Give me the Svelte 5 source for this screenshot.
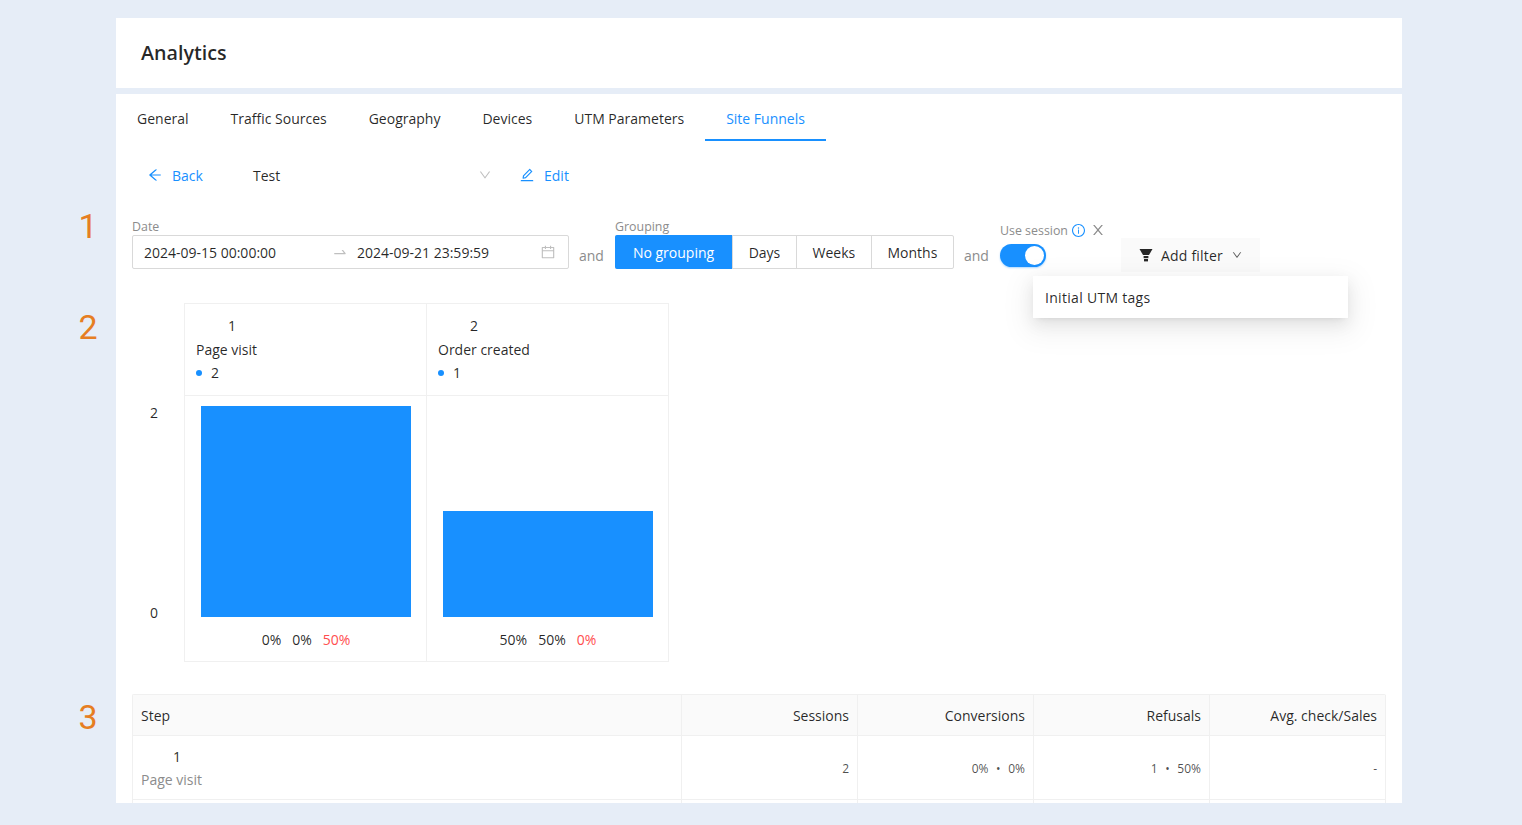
<script>
  // Site funnels report page
  const tabs = ['General', 'Traffic Sources', 'Geography', 'Devices', 'UTM Parameters', 'Site Funnels'];
  const groupings = ['No grouping', 'Days', 'Weeks', 'Months'];

  const steps = [
    { n: 1, name: 'Page visit', count: 2, height: 211, conv: '0%', conv2: '0%', refuse: '50%' },
    { n: 2, name: 'Order created', count: 1, height: 106, conv: '50%', conv2: '50%', refuse: '0%' }
  ];

  const rows = [
    { n: 1, name: 'Page visit', sessions: 2, conv: '0% • 0%', refuse: '1 • 50%', avg: '-' },
    { n: 2, name: 'Order created', sessions: 1, conv: '50% • 50%', refuse: '0 • 0%', avg: '-' }
  ];

  const chevron = 'M884 256h-75c-5.1 0-9.9 2.5-12.9 6.6L512 654.2 227.9 262.6c-3-4.1-7.8-6.6-12.9-6.6h-75c-6.5 0-10.3 7.4-6.5 12.7l352.6 486.1c12.8 17.6 39 17.6 51.7 0l352.6-486.1c3.9-5.3.1-12.7-6.4-12.7z';
</script>

<div class="page">
  <span class="mark mark-1">1</span>
  <span class="mark mark-2">2</span>
  <span class="mark mark-3">3</span>

  <header class="title-card">
    <h1>Analytics</h1>
  </header>

  <main class="card">
    <nav class="tabs">
      {#each tabs as tab}
        <span class="tab" class:active={tab === 'Site Funnels'}>{tab}</span>
      {/each}
    </nav>

    <div class="funnel-bar">
      <span class="link back">
        <svg viewBox="64 64 896 896" fill="currentColor"><path d="M872 474H286.9l350.2-304c5.6-4.9 2.2-14-5.2-14h-88.5c-3.9 0-7.6 1.4-10.5 3.9L155 487.8a31.96 31.96 0 0 0 0 48.3L535.1 866c1.5 1.3 3.3 2 5.2 2h91.5c7.4 0 10.8-9.2 5.2-14L286.9 550H872c4.4 0 8-3.6 8-8v-60c0-4.4-3.6-8-8-8z"/></svg>
        Back
      </span>
      <div class="funnel-select">
        <span>Test</span>
        <svg class="select-arrow" viewBox="64 64 896 896" fill="currentColor"><path d={chevron}/></svg>
      </div>
      <span class="link">
        <svg viewBox="64 64 896 896" fill="currentColor"><path d="M257.7 752c2 0 4-.2 6-.5L431.9 722c2-.4 3.9-1.3 5.3-2.8l423.9-423.9a9.96 9.96 0 0 0 0-14.1L694.9 114.9c-1.9-1.9-4.4-2.9-7.1-2.9s-5.2 1-7.1 2.9L256.8 538.8c-1.5 1.5-2.4 3.3-2.8 5.3l-29.5 168.2a33.5 33.5 0 0 0 9.4 29.8c6.6 6.4 14.9 9.9 23.8 9.9zm67.4-174.4L687.8 215l73.3 73.3-362.7 362.6-88.9 15.7 15.6-89zM880 836H144c-17.7 0-32 14.3-32 32v36c0 4.4 3.6 8 8 8h784c4.4 0 8-3.6 8-8v-36c0-17.7-14.3-32-32-32z"/></svg>
        Edit
      </span>
    </div>

    <section class="filters">
      <div class="field">
        <label for="range-start">Date</label>
        <div class="range" id="range-start">
          <span class="range-from">2024-09-15 00:00:00</span>
          <svg class="swap" viewBox="64 64 896 896" fill="currentColor"><path d="M873.1 596.2l-164-208A32 32 0 0 0 684 376h-64.8c-6.7 0-10.4 7.7-6.3 13l144.3 183H152c-4.4 0-8 3.6-8 8v60c0 4.4 3.6 8 8 8h695.9c26.8 0 41.7-30.8 25.2-51.8z"/></svg>
          <span class="range-to">2024-09-21 23:59:59</span>
          <svg class="calendar" viewBox="64 64 896 896" fill="currentColor"><path d="M880 184H712v-64c0-4.4-3.6-8-8-8h-56c-4.4 0-8 3.6-8 8v64H384v-64c0-4.4-3.6-8-8-8h-56c-4.4 0-8 3.6-8 8v64H144c-17.7 0-32 14.3-32 32v664c0 17.7 14.3 32 32 32h736c17.7 0 32-14.3 32-32V216c0-17.7-14.3-32-32-32zm-40 656H184V460h656v380zM184 392V256h128v48c0 4.4 3.6 8 8 8h56c4.4 0 8-3.6 8-8v-48h256v48c0 4.4 3.6 8 8 8h56c4.4 0 8-3.6 8-8v-48h128v136H184z"/></svg>
        </div>
      </div>

      <span class="and">and</span>

      <div class="field">
        <label for="grouping">Grouping</label>
        <div class="radio-group" id="grouping">
          {#each groupings as g, i}
            <span class="radio" class:selected={i === 0}>{g}</span>
          {/each}
        </div>
      </div>

      <span class="and">and</span>

      <div class="session">
        <div class="session-label">
          <span>Use session</span>
          <svg class="info" viewBox="64 64 896 896" fill="currentColor"><path d="M512 64C264.6 64 64 264.6 64 512s200.6 448 448 448 448-200.6 448-448S759.4 64 512 64zm0 820c-205.4 0-372-166.6-372-372s166.6-372 372-372 372 166.6 372 372-166.6 372-372 372z"/><path d="M464 336a48 48 0 1 0 96 0 48 48 0 1 0-96 0zm72 112h-48c-4.4 0-8 3.6-8 8v272c0 4.4 3.6 8 8 8h48c4.4 0 8-3.6 8-8V456c0-4.4-3.6-8-8-8z"/></svg>
          <svg class="close" viewBox="64 64 896 896" fill="currentColor"><path d="M563.8 512l262.5-312.9c4.4-5.2.7-13.1-6.1-13.1h-79.8c-4.7 0-9.2 2.1-12.3 5.7L511.6 449.8 295.1 191.7c-3-3.6-7.5-5.7-12.3-5.7H203c-6.8 0-10.5 7.9-6.1 13.1L459.4 512 196.9 824.9A7.95 7.95 0 0 0 203 838h79.8c4.7 0 9.2-2.1 12.3-5.7l216.5-258.1 216.5 258.1c3 3.6 7.5 5.7 12.3 5.7h79.8c6.8 0 10.5-7.9 6.1-13.1L563.8 512z"/></svg>
        </div>
        <div class="switch"><span class="knob"></span></div>
      </div>

      <div class="add-filter">
        <svg class="funnel-icon" viewBox="0 0 14 14" fill="#262626"><path d="M0.5 1h13L10 7H4z"/><path d="M4.6 8h4.8v2.2H4.6z"/><path d="M5 11h4v2.4H5z"/></svg>
        <span class="add-label">Add filter</span>
        <svg class="filter-arrow" viewBox="64 64 896 896" fill="currentColor"><path d={chevron}/></svg>
        <div class="menu"><span>Initial UTM tags</span></div>
      </div>
    </section>

    <section class="funnel">
      <div class="axis">
        <span>2</span>
        <span>0</span>
      </div>
      {#each steps as step}
        <div class="step">
          <div class="step-head">
            <div class="step-n">{step.n}</div>
            <div>{step.name}</div>
            <div class="step-count"><i class="dot"></i>{step.count}</div>
          </div>
          <div class="step-chart">
            <div class="plot">
              <div class="bar" style="height: {step.height}px"></div>
            </div>
            <div class="pcts">
              <span>{step.conv}</span>
              <span>{step.conv2}</span>
              <span class="red">{step.refuse}</span>
            </div>
          </div>
        </div>
      {/each}
    </section>

    <table class="stats">
      <colgroup>
        <col class="col-step" />
        <col class="col-num" />
        <col class="col-num" />
        <col class="col-num" />
        <col />
      </colgroup>
      <thead>
        <tr>
          <th class="left">Step</th>
          <th>Sessions</th>
          <th>Conversions</th>
          <th>Refusals</th>
          <th>Avg. check/Sales</th>
        </tr>
      </thead>
      <tbody>
        {#each rows as row}
          <tr>
            <td class="left">
              <div class="row-n">{row.n}</div>
              <div class="row-name">{row.name}</div>
            </td>
            <td>{row.sessions}</td>
            <td>{row.conv}</td>
            <td>{row.refuse}</td>
            <td>{row.avg}</td>
          </tr>
        {/each}
      </tbody>
    </table>
  </main>
</div>

<style>
  :global(body) {
    margin: 0;
    background: #e6edf7;
    font-family: "Open Sans", Roboto, sans-serif;
    font-size: 14px;
    color: rgba(0, 0, 0, 0.85);
  }

  .page {
    position: relative;
    width: 1286px;
    height: 825px;
    margin-left: 116px;
    padding-top: 18px;
    box-sizing: border-box;
  }

  /* annotations sitting in the left gutter */
  .mark {
    position: absolute;
    left: -48px;
    width: 40px;
    text-align: center;
    font-family: Roboto, sans-serif;
    font-size: 34px;
    font-weight: 400;
    line-height: 40px;
    color: #e67e22;
  }
  .mark-1 { top: 206px; }
  .mark-2 { top: 307px; }
  .mark-3 { top: 697px; }

  .title-card {
    height: 68px;
    display: flex;
    align-items: center;
    padding: 0 0 2px 25px;
    background: #fff;
  }

  h1 {
    margin: 0;
    font-size: 19.7px;
    font-weight: 600;
    color: rgba(0, 0, 0, 0.85);
  }

  .card {
    height: 709px;
    margin-top: 6px;
    background: #fff;
    overflow: hidden;
  }

  .tabs {
    display: flex;
    height: 47px;
  }

  .tab {
    height: 45px;
    padding: 0 21px;
    line-height: 49px;
  }

  .tab.active {
    color: #1890ff;
    border-bottom: 2px solid #1890ff;
  }

  .funnel-bar {
    display: flex;
    align-items: center;
    height: 32px;
    margin-top: 18px;
    padding-left: 32px;
  }

  .link {
    display: flex;
    align-items: center;
    gap: 10px;
    color: #1890ff;
  }

  .link svg {
    width: 14px;
    height: 14px;
  }

  .back {
    width: 105px;
  }

  .funnel-select {
    display: flex;
    align-items: center;
    justify-content: space-between;
    width: 238px;
    margin-right: 29px;
  }

  .select-arrow {
    width: 12px;
    height: 12px;
    color: #bfbfbf;
  }

  .filters {
    display: flex;
    align-items: flex-start;
    margin-top: 28px;
    padding-left: 16px;
  }

  .field label {
    display: block;
    height: 16px;
    font-size: 12.4px;
    line-height: 16px;
    color: #8c8c8c;
  }

  .range {
    display: flex;
    align-items: center;
    width: 437px;
    height: 34px;
    box-sizing: border-box;
    padding: 0 13px 0 11px;
    border: 1px solid #d9d9d9;
    border-radius: 2px;
  }

  .range-from {
    width: 189px;
  }

  .swap {
    width: 14px;
    height: 14px;
    color: #bfbfbf;
  }

  .range-to {
    margin-left: 10px;
    flex: 1;
  }

  .calendar {
    width: 14px;
    height: 14px;
    color: #bfbfbf;
  }

  .and {
    width: 36px;
    padding: 27px 0 0 10px;
    line-height: 20px;
    color: #8c8c8c;
  }

  .radio-group {
    display: flex;
    width: 339px;
    height: 34px;
    box-sizing: border-box;
    border: 1px solid #d9d9d9;
    border-radius: 2px;
  }

  .radio {
    flex: 1 1 auto;
    padding: 1px 15px 0;
    line-height: 32px;
    text-align: center;
    border-left: 1px solid #d9d9d9;
  }

  .radio:first-child {
    flex: 0 0 117px;
    box-sizing: border-box;
    margin: -1px 0 -1px -1px;
    padding: 2px 0 0;
    border-left: 0;
    border-radius: 2px 0 0 2px;
    background: #1890ff;
    color: #fff;
  }

  .session {
    width: 121px;
    padding-top: 3px;
  }

  .session-label {
    display: flex;
    align-items: center;
    height: 16px;
    font-size: 12.4px;
    color: #8c8c8c;
  }

  .info {
    width: 13px;
    height: 13px;
    margin-left: 4px;
    color: #1890ff;
  }

  .close {
    width: 14px;
    height: 14px;
    margin-left: 6px;
    color: #8c8c8c;
  }

  .switch {
    position: relative;
    width: 46px;
    height: 23px;
    margin-top: 6px;
    border-radius: 12px;
    background: #1890ff;
    box-shadow: 0 1px 2px rgba(24, 144, 255, 0.35);
  }

  .knob {
    position: absolute;
    top: 2px;
    right: 2px;
    width: 19px;
    height: 19px;
    border-radius: 50%;
    background: #fff;
  }

  .add-filter {
    position: relative;
    display: flex;
    align-items: center;
    width: 139px;
    height: 34px;
    margin-top: 19px;
    box-sizing: border-box;
    padding-left: 18px;
    background: #fafafa;
  }

  .funnel-icon {
    width: 14px;
    height: 14px;
    margin-right: 8px;
  }

  .add-label {
    letter-spacing: 0.2px;
  }

  .filter-arrow {
    width: 10px;
    height: 10px;
    margin-left: 9px;
    color: #595959;
  }

  .menu {
    position: absolute;
    top: 38px;
    left: -88px;
    width: 315px;
    height: 42px;
    box-sizing: border-box;
    padding: 0 12px;
    display: flex;
    align-items: center;
    letter-spacing: 0.3px;
    background: #fff;
    box-shadow: 0 3px 6px -4px rgba(0, 0, 0, 0.12), 0 6px 16px 0 rgba(0, 0, 0, 0.08), 0 9px 28px 8px rgba(0, 0, 0, 0.05);
  }

  .funnel {
    display: flex;
    margin-top: 31px;
    padding-left: 16px;
  }

  .axis {
    display: flex;
    flex-direction: column;
    justify-content: space-between;
    width: 52px;
    height: 359px;
    box-sizing: border-box;
    padding: 100px 26px 39px 0;
    text-align: right;
    line-height: 20px;
  }

  .step {
    width: 243px;
    height: 359px;
    box-sizing: border-box;
    border: 1px solid #f0f0f0;
  }

  .step + .step {
    width: 242px;
    border-left: 0;
  }

  .step-head {
    height: 92px;
    box-sizing: border-box;
    padding: 10px 11px 0;
    border-bottom: 1px solid #f0f0f0;
    line-height: 23.5px;
  }

  .step-n {
    padding-left: 32px;
  }

  .step-count {
    display: flex;
    align-items: center;
  }

  .dot {
    width: 6px;
    height: 6px;
    margin-right: 9px;
    border-radius: 50%;
    background: #1890ff;
  }

  .step-chart {
    padding: 10px 15px 0 16px;
  }

  .plot {
    display: flex;
    align-items: flex-end;
    height: 211px;
  }

  .bar {
    width: 210px;
    background: #1890ff;
  }

  .pcts {
    display: flex;
    justify-content: center;
    gap: 11px;
    margin-top: 13px;
    line-height: 20px;
  }

  .red {
    color: #ff4d4f;
  }

  .stats {
    width: 1254px;
    margin: 32px 0 0 16px;
    border-collapse: separate;
    border-spacing: 0;
    table-layout: fixed;
    border-top: 1px solid #f0f0f0;
    border-left: 1px solid #f0f0f0;
    border-radius: 2px 2px 0 0;
  }

  .col-step { width: 549px; }
  .col-num { width: 176px; }

  th, td {
    padding: 0 8px;
    border-right: 1px solid #f0f0f0;
    border-bottom: 1px solid #f0f0f0;
    text-align: right;
  }

  th {
    height: 40px;
    background: #fafafa;
    font-weight: 400;
  }

  td {
    height: 62px;
    padding-top: 1px;
    font-size: 12px;
    word-spacing: 4.5px;
    color: rgba(0, 0, 0, 0.7);
  }

  th.left, td.left {
    text-align: left;
  }

  td.left {
    font-size: 14px;
    line-height: 23.5px;
    word-spacing: 0;
  }

  .row-n {
    padding-left: 32px;
    color: rgba(0, 0, 0, 0.85);
  }

  .row-name {
    color: #8c8c8c;
  }
</style>
